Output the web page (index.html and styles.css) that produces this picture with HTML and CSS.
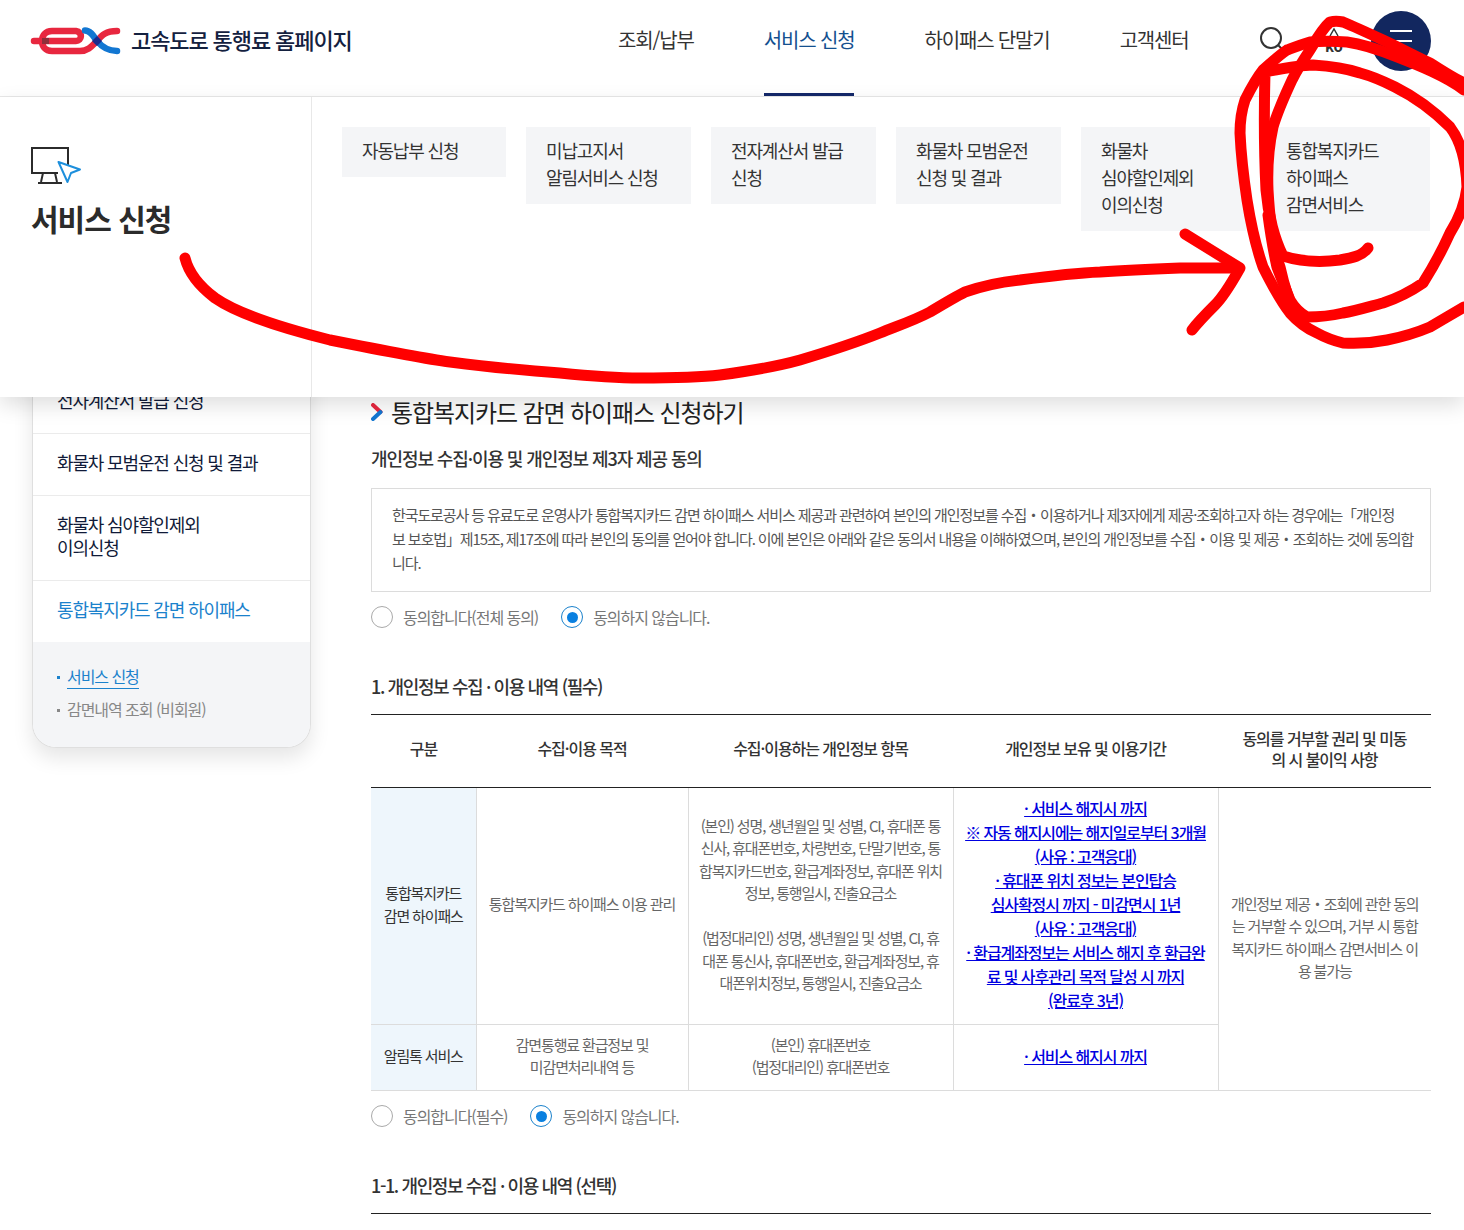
FILE: index.html
```html
<!DOCTYPE html>
<html lang="ko">

<head>
    <meta charset="utf-8">
    <title>통합복지카드 감면 하이패스 신청하기</title>
    <link rel="stylesheet" href="styles.css">
</head>

<body>

    <header id="head">
        <a class="logo">
            <svg width="92" height="32" viewBox="0 0 92 32">
                <path d="M4 16H46C52 16 53 7 46 6H22C15 6 12 11 12 16C12 21 15 26 22 26H50C58 26 62 21 67 16C72 10 76 6 87 6" fill="none" stroke="#e8273f" stroke-width="6.500" stroke-linecap="round" />
                <path d="M55 5.500C61 5.500 64 12 67 16C72 22 78 26 87 26" fill="none" stroke="#1277d2" stroke-width="6.500" stroke-linecap="round" />
                <rect x="12" y="13" width="7" height="6" fill="#8f2f3a" />
                <path d="M67 11L72 16L67 21L62 16Z" fill="#1b2a8c" />
            </svg>
            <strong>고속도로 통행료 홈페이지</strong>
        </a>
        <nav class="gnb">
            <a>조회/납부</a>
            <a class="on">서비스 신청</a>
            <a>하이패스 단말기</a>
            <a>고객센터</a>
        </nav>
        <div class="util">
            <svg class="search" width="28" height="28" viewBox="0 0 28 28">
                <circle cx="11" cy="11" r="10" fill="none" stroke="#333" stroke-width="2" />
                <path d="M18 18L25 25" stroke="#333" stroke-width="2" />
            </svg>
            <div class="lang">
                <svg width="14" height="14" viewBox="0 0 14 14">
                    <path d="M3 13L7 6L11 13" fill="none" stroke="#333" stroke-width="1.500" />
                </svg>
                <span>ko</span>
            </div>
            <a class="menubnt"><i></i><i></i><i></i></a>
        </div>
    </header>

    <div id="mega">
        <div class="mega-title">
            <svg width="51" height="38" viewBox="0 0 51 38">
                <path d="M37 20V1H1V26H27" fill="none" stroke="#2b2b2b" stroke-width="2" />
                <path d="M12 26L10 35M24 26L26 35M7 36H31" fill="none" stroke="#2b2b2b" stroke-width="2" />
                <path d="M27.500 15L49 22.500L40 26L36.500 35Z" fill="#fff" stroke="#1d8fdc" stroke-width="2" stroke-linejoin="round" />
            </svg>
            <h2>서비스 신청</h2>
        </div>
        <ul class="mega-list">
            <li>자동납부 신청</li>
            <li>미납고지서<br>알림서비스 신청</li>
            <li>전자계산서 발급<br>신청</li>
            <li>화물차 모범운전<br>신청 및 결과</li>
            <li>화물차<br>심야할인제외<br>이의신청</li>
            <li>통합복지카드<br>하이패스<br>감면서비스</li>
        </ul>
    </div>

    <div id="wrap">
        <aside class="side">
            <ul>
                <li>전자계산서 발급 신청</li>
                <li>화물차 모범운전 신청 및 결과</li>
                <li>화물차 심야할인제외<br>이의신청</li>
                <li class="on">통합복지카드 감면 하이패스</li>
            </ul>
            <div class="side-sub">
                <a class="on">서비스 신청</a>
                <a>감면내역 조회 (비회원)</a>
            </div>
        </aside>

        <main class="cont">
            <h3 class="title">
                <svg width="12" height="18" viewBox="0 0 12 18">
                    <path d="M2 2L9.500 9" fill="none" stroke="#e8273f" stroke-width="4" stroke-linecap="round" />
                    <path d="M9.500 9L2 16" fill="none" stroke="#1277d2" stroke-width="4" stroke-linecap="round" />
                </svg>
                통합복지카드 감면 하이패스 신청하기
            </h3>
            <h4 class="sub">개인정보 수집·이용 및 개인정보 제3자 제공 동의</h4>
            <div class="agree-box">한국도로공사 등 유료도로 운영사가 통합복지카드 감면 하이패스 서비스 제공과 관련하여 본인의 개인정보를 수집・이용하거나 제3자에게 제공·조회하고자 하는 경우에는「개인정<br>보 보호법」제15조, 제17조에 따라 본인의 동의를 얻어야 합니다. 이에 본인은 아래와 같은 동의서 내용을 이해하였으며, 본인의 개인정보를 수집・이용 및 제공・조회하는 것에 동의합<br>니다.</div>
            <div class="radios">
                <label><i class="radio"></i>동의합니다(전체 동의)</label>
                <label><i class="radio on"></i>동의하지 않습니다.</label>
            </div>

            <h4 class="num">1. 개인정보 수집 · 이용 내역 (필수)</h4>
            <table>
                <colgroup>
                    <col class="c1">
                    <col class="c2">
                    <col class="c3">
                    <col class="c4">
                    <col class="c5">
                </colgroup>
                <thead>
                    <tr>
                        <th>구분</th>
                        <th>수집·이용 목적</th>
                        <th>수집·이용하는 개인정보 항목</th>
                        <th>개인정보 보유 및 이용기간</th>
                        <th>동의를 거부할 권리 및 미동<br>의 시 불이익 사항</th>
                    </tr>
                </thead>
                <tbody>
                    <tr class="r1">
                        <td class="gubun">통합복지카드<br>감면 하이패스</td>
                        <td>통합복지카드 하이패스 이용 관리</td>
                        <td>(본인) 성명, 생년월일 및 성별, CI, 휴대폰 통신사, 휴대폰번호, 차량번호, 단말기번호, 통합복지카드번호, 환급계좌정보, 휴대폰 위치정보, 통행일시, 진출요금소<br><br>(법정대리인) 성명, 생년월일 및 성별, CI, 휴대폰 통신사, 휴대폰번호, 환급계좌정보, 휴대폰위치정보, 통행일시, 진출요금소</td>
                        <td class="strong-link"><a>· 서비스 해지시 까지<br>※ 자동 해지시에는 해지일로부터 3개월<br>(사유 : 고객응대)<br>· 휴대폰 위치 정보는 본인탑승<br>심사확정시 까지 - 미감면시 1년<br>(사유 : 고객응대)<br>· 환급계좌정보는 서비스 해지 후 환급완료 및 사후관리 목적 달성 시 까지<br>(완료후 3년)</a></td>
                        <td rowspan="2">개인정보 제공・조회에 관한 동의는 거부할 수 있으며, 거부 시 통합복지카드 하이패스 감면서비스 이용 불가능</td>
                    </tr>
                    <tr class="r2">
                        <td class="gubun">알림톡 서비스</td>
                        <td>감면통행료 환급정보 및<br>미감면처리내역 등</td>
                        <td>(본인) 휴대폰번호<br>(법정대리인) 휴대폰번호</td>
                        <td class="strong-link"><a>· 서비스 해지시 까지</a></td>
                    </tr>
                </tbody>
            </table>
            <div class="radios">
                <label><i class="radio"></i>동의합니다(필수)</label>
                <label><i class="radio on"></i>동의하지 않습니다.</label>
            </div>

            <h4 class="num">1-1. 개인정보 수집 · 이용 내역 (선택)</h4>
            <div class="next-line"></div>
        </main>
    </div>

    <svg id="scribble" width="1464" height="400" viewBox="0 0 1464 400">
        <path d="M185 258C188 270 195 283 215 298C235 312 270 325 330 340C380 350 420 358 450 362C490 367 530 371 560 373C590 376 615 378 640 378C670 378 695 378 720 375C750 371 775 367 800 360C830 351 855 343 880 333C900 325 915 320 930 312C945 303 955 297 965 292C985 285 1000 282 1020 280C1050 276 1075 273 1100 272C1130 270 1155 269 1180 268L1232 268" />
        <path d="M1185 234L1240 268C1232 282 1225 295 1215 305C1205 315 1198 322 1192 330" />
        <path d="M1368 248C1362 256 1352 258 1340 260C1325 262 1305 263 1283 256C1275 240 1268 215 1266 190C1264 150 1264 110 1265 72C1285 68 1300 65 1313 65C1330 66 1345 68 1360 73C1375 77 1385 82 1395 87C1415 97 1435 112 1450 127C1460 140 1466 160 1467 187C1465 205 1458 220 1450 233C1440 255 1430 272 1423 283C1410 292 1398 298 1383 303C1368 307 1355 311 1343 313C1330 316 1318 317 1307 317C1298 312 1293 305 1290 300C1284 285 1280 275 1277 267C1272 245 1270 230 1268 215" />
        <path d="M1464 90C1445 76 1420 66 1397 57C1380 50 1362 44 1347 42C1333 41 1322 41 1310 42C1300 45 1295 47 1287 50C1278 56 1270 64 1263 70C1255 80 1250 90 1245 100C1241 112 1240 122 1240 133C1241 155 1244 180 1247 200C1251 225 1256 247 1263 267C1272 285 1280 300 1290 313C1298 322 1308 329 1317 333C1326 338 1335 341 1343 343C1358 344 1372 343 1387 340C1402 337 1416 333 1430 327C1442 320 1452 314 1464 307" />
        <path d="M1464 83C1450 76 1440 69 1430 63C1415 56 1400 48 1383 40C1368 33 1355 27 1343 22C1338 21 1334 21 1330 22C1322 29 1316 40 1310 50C1302 62 1296 72 1292 80C1285 95 1278 110 1273 127C1269 145 1267 165 1268 190C1270 225 1274 250 1280 267C1284 285 1288 300 1296 315" />
    </svg>

</body>

</html>
```

FILE: styles.css
```css
* {
    box-sizing: border-box;
}

body {
    margin: 0;
    width: 1464px;
    height: 1230px;
    overflow: hidden;
    position: relative;
    background: #fff;
    font-family: "Noto Sans CJK KR", "Noto Sans", sans-serif;
    font-size: 15px;
    color: #333;
    letter-spacing: -0.9px;
}

ul {
    margin: 0;
    padding: 0;
    list-style: none;
}

h2,
h3,
h4 {
    margin: 0;
    font-weight: 500;
}

#head {
    height: 97px;
    padding: 0 33px 0 30px;
    display: flex;
    align-items: center;
    background: #fff;
    border-bottom: 1px solid #e8e8e8;
}

.logo {
    display: flex;
    align-items: center;
    gap: 9px;
    width: 586px;
    flex: none;
    margin-top: -15px;
}

.logo strong {
    padding-bottom: 4px;
    font-size: 22px;
    font-weight: 500;
    color: #14213f;
    letter-spacing: -1.1px;
}

.gnb {
    display: flex;
    gap: 70px;
    height: 96px;
    margin-left: 2px;
}

.gnb a {
    height: 96px;
    padding-top: 24px;
    font-size: 20px;
    line-height: 32px;
    color: #333;
    letter-spacing: -1.15px;
}

.gnb a.on {
    color: #14508f;
    border-bottom: 3px solid #14286a;
}

.util {
    margin-left: auto;
    display: flex;
    align-items: center;
    margin-top: -15px;
}

.search {
    margin-right: 28px;
}

.lang {
    width: 36px;
    height: 36px;
    display: flex;
    flex-direction: column;
    align-items: center;
    font-size: 15px;
    font-weight: 700;
    line-height: 18px;
    color: #333;
    letter-spacing: 0;
}

.menubnt {
    width: 60px;
    height: 60px;
    margin-left: 19px;
    border-radius: 50%;
    background: #12275f;
    display: flex;
    flex-direction: column;
    justify-content: center;
    align-items: center;
    gap: 8px;
}

.menubnt i {
    display: block;
    width: 22px;
    height: 2px;
    background: #fff;
}

.menubnt i:nth-child(2) {
    width: 18px;
    margin-left: 4px;
}

/* 펼쳐진 메뉴 */
#mega {
    position: absolute;
    top: 97px;
    left: 0;
    z-index: 10;
    width: 1464px;
    height: 300px;
    display: flex;
    background: #fff;
    box-shadow: 0 8px 20px rgba(0, 0, 0, 0.13);
}

.mega-title {
    width: 312px;
    flex: none;
    padding: 50px 0 0 31px;
    border-right: 1px solid #e8e8e8;
}

.mega-title svg {
    display: block;
}

.mega-title h2 {
    margin-top: 11px;
    font-size: 30px;
    line-height: 44px;
    font-weight: 700;
    color: #2b2b2b;
    letter-spacing: -1px;
}

.mega-list {
    display: flex;
    align-items: flex-start;
    gap: 20px;
    padding: 30px 0 0 30px;
}

.mega-list li {
    width: 165px;
    padding: 10px 20px 13px;
    background: #f4f5f7;
    font-size: 18px;
    line-height: 27px;
    color: #333;
    letter-spacing: -1.15px;
}

.mega-list li:first-child {
    width: 164px;
}

.mega-list li:last-child {
    width: 164px;
}

/* 본문 */
#wrap {
    display: flex;
    align-items: flex-start;
    gap: 60px;
    padding: 275px 33px 0 32px;
}

.side {
    width: 279px;
    flex: none;
    border: 1px solid #dfdfdf;
    border-top: 0;
    border-radius: 0 0 24px 24px;
    overflow: hidden;
    background: #fff;
    box-shadow: 0 10px 20px rgba(0, 0, 0, 0.1);
}

.side li {
    padding: 17px 24px 21px;
    border-bottom: 1px solid #ebebeb;
    font-size: 18px;
    line-height: 23px;
    font-weight: 400;
    color: #101a38;
    letter-spacing: -1.15px;
}

.side li.on {
    color: #1b82cc;
    border-bottom: 0;
}

.side-sub {
    height: 105px;
    padding: 23px 24px 0;
    background: #f4f5f7;
    display: flex;
    flex-direction: column;
    align-items: flex-start;
    gap: 9px;
}

.side-sub a {
    position: relative;
    margin-left: 10px;
    font-size: 16px;
    line-height: 23px;
    color: #888;
    letter-spacing: -1.05px;
}

.side-sub a::before {
    content: "";
    position: absolute;
    left: -10px;
    top: 11px;
    width: 3px;
    height: 3px;
    background: #888;
}

.side-sub a.on {
    color: #1b82cc;
    border-bottom: 1px solid #1b82cc;
}

.side-sub a.on::before {
    background: #1b82cc;
}

.cont {
    width: 1060px;
    flex: none;
    padding-top: 23px;
}

.title {
    display: flex;
    align-items: center;
    gap: 8px;
    font-size: 24px;
    line-height: 34px;
    font-weight: 400;
    color: #222;
    letter-spacing: -1.1px;
}

.sub {
    margin-top: 16px;
    font-size: 18px;
    line-height: 26px;
    color: #333;
    letter-spacing: -1.1px;
}

.agree-box {
    margin-top: 17px;
    height: 104px;
    padding: 14px 12px 14px 20px;
    border: 1px solid #dcdcdc;
    font-size: 15px;
    line-height: 24px;
    color: #555;
    letter-spacing: -1.1px;
}

.radios {
    display: flex;
    gap: 23px;
    margin-top: 12px;
    height: 26px;
}

.radios label {
    display: flex;
    align-items: center;
    gap: 10px;
    font-size: 16px;
    color: #777;
    letter-spacing: -1.05px;
}

.radio {
    width: 22px;
    height: 22px;
    border: 1px solid #aaa;
    border-radius: 50%;
    background: #fff;
    display: flex;
    align-items: center;
    justify-content: center;
}

.radio.on {
    border-color: #1b82cc;
}

.radio.on::after {
    content: "";
    width: 11px;
    height: 11px;
    border-radius: 50%;
    background: #0a80e0;
}

.num {
    margin-top: 43px;
    font-size: 18px;
    line-height: 26px;
    color: #333;
    letter-spacing: -1.38px;
}

table {
    width: 1060px;
    margin-top: 15px;
    table-layout: fixed;
    border-collapse: collapse;
    border-top: 1px solid #222;
}

.c1 {
    width: 105px;
}

.c2 {
    width: 212px;
}

.c3 {
    width: 265px;
}

.c4 {
    width: 265px;
}

.c5 {
    width: 213px;
}

th {
    height: 73px;
    padding: 0 12px 5px;
    border-bottom: 1px solid #222;
    font-size: 16px;
    line-height: 21px;
    font-weight: 500;
    color: #333;
    letter-spacing: -1.05px;
}

td {
    padding: 0 10px 3px;
    border: 1px solid #dcdcdc;
    border-top-width: 0;
    text-align: center;
    font-size: 15px;
    line-height: 22.5px;
    color: #666;
    letter-spacing: -1.15px;
}

td:first-child {
    border-left: 0;
}

td:last-child {
    border-right: 0;
}

td.gubun {
    background: #eef6fc;
    color: #333;
    padding: 0 4px 3px;
}

.r1 {
    height: 237px;
}

.r2 {
    height: 66px;
}

.strong-link {
    padding: 0 10px 4px;
    font-size: 16px;
    line-height: 24px;
    font-weight: 500;
    letter-spacing: -1.1px;
}

.strong-link a {
    color: #0000e0;
    text-decoration: underline;
}

table+.radios {
    margin-top: 12px;
}

.next-line {
    margin-top: 15px;
    border-top: 1px solid #222;
}

/* 빨간 손글씨 표시 */
#scribble {
    position: absolute;
    top: 0;
    left: 0;
    z-index: 20;
    pointer-events: none;
}

#scribble path {
    fill: none;
    stroke: #f00;
    stroke-width: 11;
    stroke-linecap: round;
    stroke-linejoin: round;
}
```
